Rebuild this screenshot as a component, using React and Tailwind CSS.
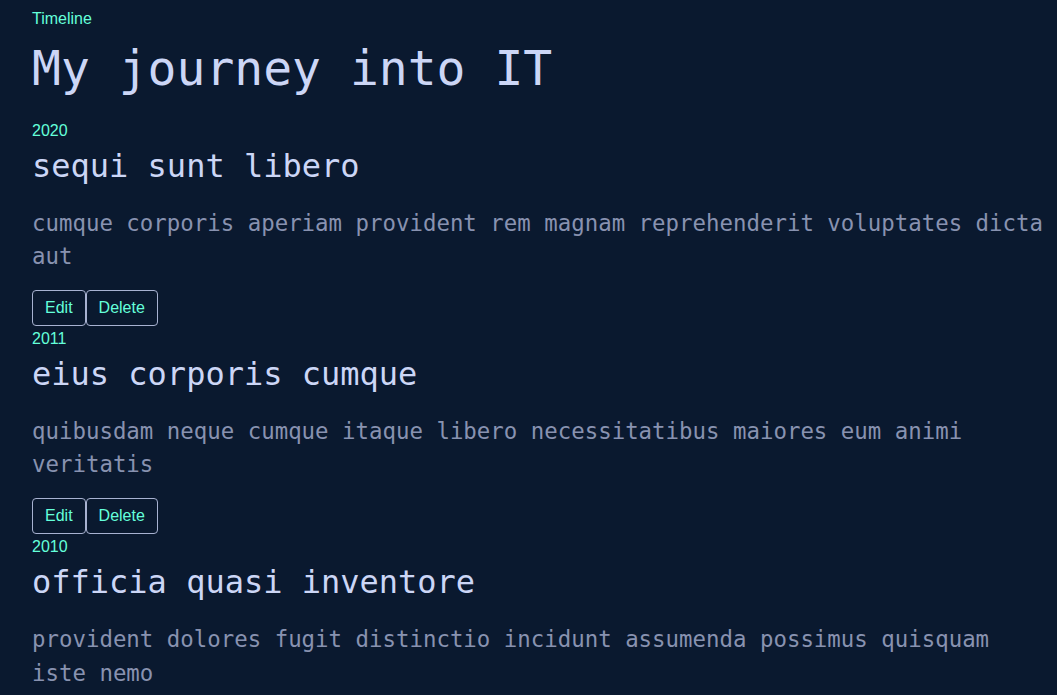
const ITEMS = [
  {
    year: "2020",
    title: "sequi sunt libero",
    body: "cumque corporis aperiam provident rem magnam reprehenderit voluptates dicta aut",
  },
  {
    year: "2011",
    title: "eius corporis cumque",
    body: "quibusdam neque cumque itaque libero necessitatibus maiores eum animi veritatis",
  },
  {
    year: "2010",
    title: "officia quasi inventore",
    body: "provident dolores fugit distinctio incidunt assumenda possimus quisquam iste nemo",
  },
];

const mono = "font-['DejaVu_Sans_Mono','Liberation_Mono',monospace]";
const sans = "font-['Liberation_Sans',Arial,sans-serif]";

const TimelineItem = ({ year, title, body }) => (
  <div className="pb-[4px]">
    <div className={`${sans} text-[16px] leading-[18px] text-[#64ffda]`}>{year}</div>
    <h3 className={`${mono} mt-[10.5px] text-[32px] leading-[32px] font-normal text-[#ccd6f6]`}>
      {title}
    </h3>
    <p className={`${mono} mt-[24.5px] text-[22.4px] leading-[1.5] text-[#8892b0]`}>{body}</p>
    <div className={`${sans} mt-[16px] flex`}>
      <button className="h-[36px] px-3 border border-[#a8b2d1] rounded text-[16px] leading-[18px] text-[#64ffda] bg-transparent">
        Edit
      </button>
      <button className="h-[36px] px-3 border border-[#a8b2d1] rounded text-[16px] leading-[18px] text-[#64ffda] bg-transparent">
        Delete
      </button>
    </div>
  </div>
);

export default function App() {
  return (
    <div className="min-h-screen bg-[#0a192f] pl-8 pr-3 pt-[10px] overflow-hidden">
      <div className={`${sans} text-[16px] leading-[18px] text-[#64ffda]`}>Timeline</div>
      <h1 className={`${mono} mt-[16px] text-[48px] leading-[48px] font-normal text-[#ccd6f6]`}>
        My journey into IT
      </h1>
      <div className="mt-[29.5px]">
        {ITEMS.map((item) => (
          <TimelineItem key={item.year} {...item} />
        ))}
      </div>
    </div>
  );
}
